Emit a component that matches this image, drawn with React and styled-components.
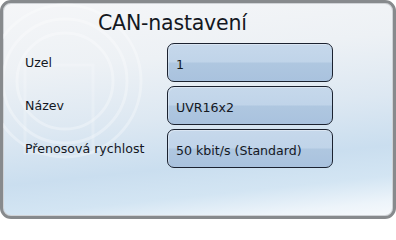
import React from 'react';
import styled, { createGlobalStyle } from 'styled-components';

const GlobalStyle = createGlobalStyle`
  html, body {
    margin: 0;
    padding: 0;
    background: #ffffff;
  }
`;

const Frame = styled.div`
  position: relative;
  box-sizing: border-box;
  width: 396px;
  height: 219px;
  border: 3px solid #878a8d;
  border-radius: 11px;
  overflow: hidden;
  background: linear-gradient(
    174deg,
    #f5f6f8 0%,
    #edf1f5 28%,
    #dde8f2 52%,
    #cadeef 72%,
    #d3e5f3 84%,
    #edf4fa 94%,
    #f6f9fc 100%
  );
  box-shadow: inset 0 0 0 1px #cfd2d6;
  font-family: "DejaVu Sans", Verdana, sans-serif;
  color: #14181f;
`;

const Watermark = styled.svg`
  position: absolute;
  left: -20px;
  top: 0;
  pointer-events: none;
`;

const Content = styled.div`
  position: relative;
  display: flex;
  flex-direction: column;
`;

const Title = styled.div`
  height: 40px;
  padding-left: 95px;
  font-size: 20.5px;
  line-height: 40px;
  letter-spacing: -0.2px;
`;

const Rows = styled.div`
  display: grid;
  grid-template-columns: 142px 166px;
  row-gap: 4px;
  padding-left: 22px;
`;

const Label = styled.div`
  display: flex;
  align-items: center;
  font-size: 12.6px;
`;

const Field = styled.div`
  box-sizing: border-box;
  height: 39px;
  display: flex;
  align-items: center;
  padding-left: 8px;
  padding-top: 3px;
  font-size: 12.6px;
  border: 1.5px solid #1b2230;
  border-radius: 7px;
  background: linear-gradient(
    180deg,
    #c6d8eb 0%,
    #c0d4e9 48%,
    #afc7e0 52%,
    #a9c2de 100%
  );
  box-shadow: inset 1px 1px 0 rgba(255, 255, 255, 0.35);
`;

const rows = [
  { label: 'Uzel', value: '1' },
  { label: 'Název', value: 'UVR16x2' },
  { label: 'Přenosová rychlost', value: '50 kbit/s (Standard)' },
];

export default function App() {
  return (
    <>
      <GlobalStyle />
      <Frame>
        <Watermark width="200" height="200" viewBox="0 0 200 200">
          <g fill="none" stroke="#ffffff" strokeOpacity="0.3" strokeWidth="3">
            <circle cx="82" cy="78" r="48" />
            <circle cx="82" cy="78" r="62" />
            <circle cx="82" cy="78" r="76" />
          </g>
          <rect x="42" y="62" width="68" height="88" fill="none" stroke="#ffffff" strokeOpacity="0.2" strokeWidth="3" />
        </Watermark>
        <Content>
          <Title>CAN-nastavení</Title>
          <Rows>
            {rows.map((r) => (
              <React.Fragment key={r.label}>
                <Label>{r.label}</Label>
                <Field>{r.value}</Field>
              </React.Fragment>
            ))}
          </Rows>
        </Content>
      </Frame>
    </>
  );
}
